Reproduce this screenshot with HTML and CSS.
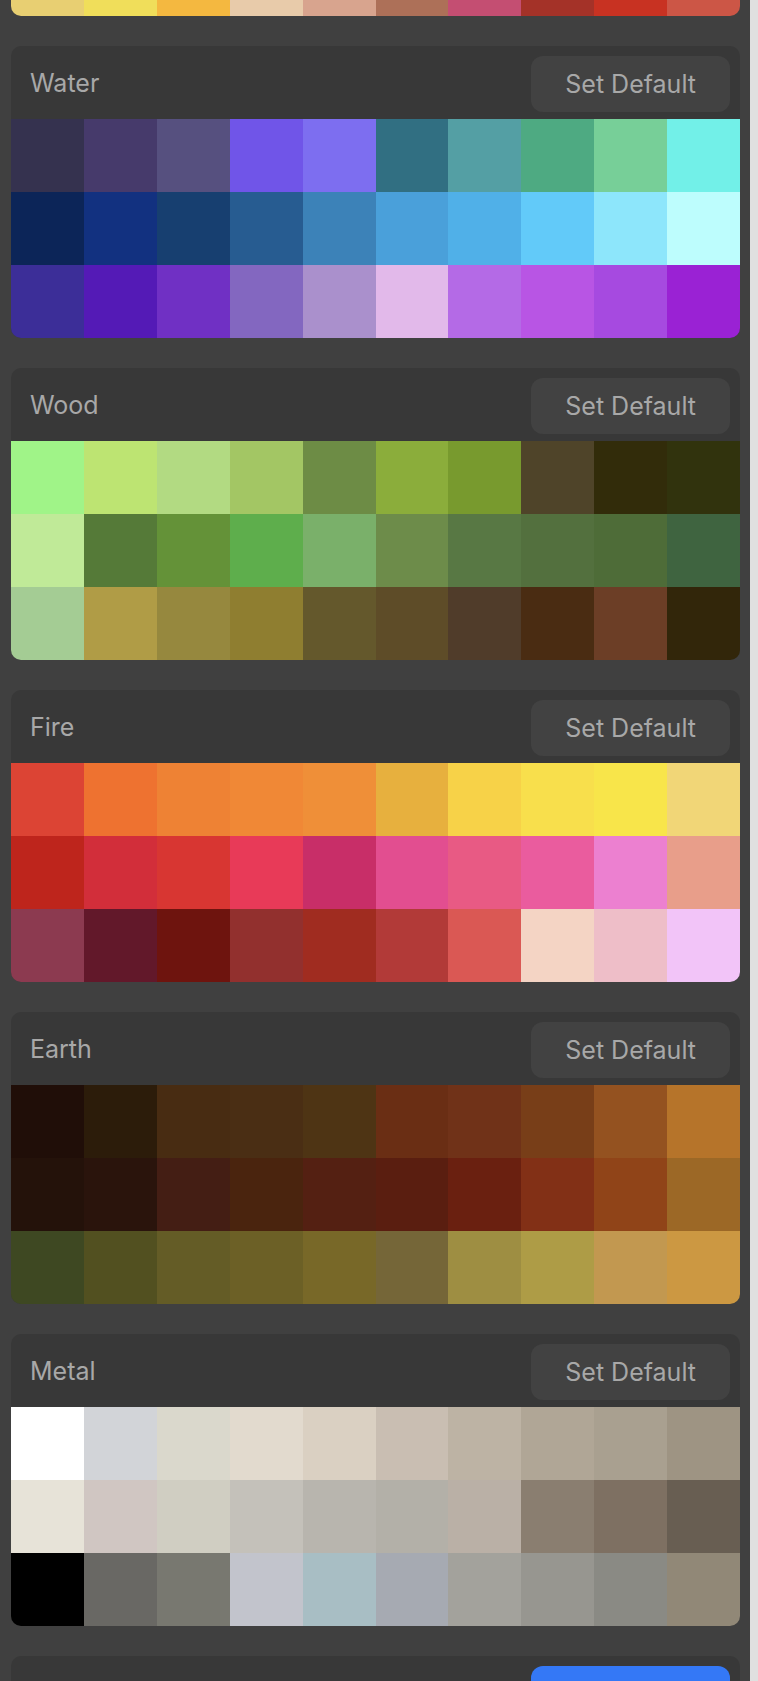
FILE: index.html
```html
<!DOCTYPE html>
<html lang="en">

<head>
    <meta charset="UTF-8">
    <meta name="viewport" content="width=device-width, initial-scale=1.0">
    <title>Palettes</title>
    <link rel="stylesheet" href="styles.css">
</head>

<body>
    <div class="page">
        <div class="list" id="list">
            <div class="swatches tail"></div>
        </div>
        <div class="scroll-track"></div>
    </div>

    <script>
        const palettes = {
            prev: [
                ['#e8cf72', '#f0de5a', '#f4b840', '#e8cbaa', '#d8a48e', '#ad7058', '#c44e72', '#a43228', '#c83222', '#cc5646']
            ],
            Water: [
                ['#35324f', '#463a6b', '#56507f', '#7055e8', '#7d6ef0', '#316f82', '#549fa4', '#4eaa82', '#77cf98', '#72f0e8'],
                ['#0c2558', '#123180', '#173f70', '#275c91', '#3c82b8', '#4aa0da', '#50b0e8', '#62caf9', '#8de6fb', '#bdfdfd'],
                ['#3c2e98', '#541ab6', '#7030c4', '#8367c0', '#aa90cc', '#e2b9ea', '#b46ae6', '#b855e4', '#a64ae0', '#9a22d4']
            ],
            Wood: [
                ['#a0f488', '#bde472', '#b2da82', '#a3c664', '#6d8c45', '#8bad3b', '#789a2e', '#4f4429', '#322c0a', '#31330d'],
                ['#c0ea98', '#557a38', '#649238', '#5eae4c', '#7ab06a', '#6d8c4a', '#587844', '#53703e', '#4e6c38', '#3f6440'],
                ['#a4cc94', '#b09c46', '#96883e', '#8f7e30', '#64582c', '#5e4c28', '#503c2a', '#4a2c12', '#6c3e26', '#32260a']
            ],
            Fire: [
                ['#dc4434', '#ee7230', '#ee8234', '#f08836', '#ef8f38', '#e7b03e', '#f7d248', '#f8df4c', '#f8e54a', '#f1d677'],
                ['#be251c', '#d22e3a', '#d83632', '#e83a58', '#c82e68', '#e24e90', '#e85a84', '#ea5c9e', '#ec80d0', '#e89e8a'],
                ['#8c3a50', '#62182a', '#6e140e', '#92302e', '#a02c20', '#b23a38', '#da5854', '#f4d4c4', '#eebec8', '#f2c4f8']
            ],
            Earth: [
                ['#200e08', '#2c1c0a', '#482c12', '#4a2e14', '#4e3414', '#6a2e14', '#703218', '#783e18', '#945220', '#b6742a'],
                ['#24120a', '#2a140c', '#441e14', '#4a240e', '#542012', '#5a1e10', '#6a2010', '#823016', '#904418', '#9c6826'],
                ['#3e4822', '#525020', '#645c26', '#6c6026', '#786828', '#756638', '#9e8e42', '#ae9c46', '#c29850', '#cc9842']
            ],
            Metal: [
                ['#ffffff', '#d2d4d8', '#dad8cc', '#e2dace', '#dad0c2', '#c9beb2', '#bdb3a4', '#b0a696', '#a9a090', '#9e9483'],
                ['#e7e3d8', '#d0c6c2', '#d0cec2', '#c4c1ba', '#b8b5ae', '#b3b0a8', '#bab0a6', '#8a7e70', '#7e7062', '#685e52'],
                ['#000000', '#696864', '#787870', '#c2c4cc', '#a8bec4', '#a6aab2', '#a3a29c', '#979690', '#8a8a84', '#918877']
            ]
        };

        function fillSwatches(el, rows) {
            rows.forEach(row => {
                row.forEach(color => {
                    const cell = document.createElement('div');
                    cell.className = 'swatch';
                    cell.style.backgroundColor = color;
                    el.appendChild(cell);
                });
            });
        }

        const list = document.getElementById('list');
        fillSwatches(list.querySelector('.tail'), palettes.prev);

        ['Water', 'Wood', 'Fire', 'Earth', 'Metal'].forEach(name => {
            const panel = document.createElement('div');
            panel.className = 'panel';
            panel.innerHTML = `
                <div class="panel-header">
                    <span class="panel-title">${name}</span>
                    <button type="button" class="default-btn">Set Default</button>
                </div>
                <div class="swatches"></div>
            `;
            fillSwatches(panel.querySelector('.swatches'), palettes[name]);
            list.appendChild(panel);
        });

        // the selected palette, scrolled mostly out of view
        const current = document.createElement('div');
        current.className = 'panel';
        current.innerHTML = `
            <div class="panel-header">
                <span class="panel-title"></span>
                <button type="button" class="default-btn active" aria-label="Default"></button>
            </div>
        `;
        list.appendChild(current);
    </script>
</body>

</html>
```

FILE: styles.css
```css
html,
body {
    margin: 0;
    padding: 0;
    background-color: #404040;
    font-family: Inter, "Noto Sans", sans-serif;
    overflow: hidden;
}

.page {
    display: flex;
    height: 1681px;
}

.list {
    flex: 1;
    display: flex;
    flex-direction: column;
    gap: 30px;
    padding: 0 10px 0 11px;
}

.scroll-track {
    width: 8px;
    background-color: #e0e0e0;
}

.panel {
    background-color: #383838;
    border-radius: 10px;
    overflow: hidden;
    flex-shrink: 0;
}

.panel-header {
    display: flex;
    align-items: center;
    justify-content: space-between;
    height: 73px;
    padding: 0 10px 0 19px;
}

.panel-title {
    color: #a8a8a8;
    font-size: 25px;
}

.default-btn {
    height: 56px;
    padding: 0 34px;
    border: none;
    border-radius: 12px;
    background-color: #424242;
    color: #a8a8a8;
    font-family: inherit;
    font-size: 25px;
    margin-top: 2px;
}

.default-btn.active {
    width: 199px;
    background-color: #3478f6;
    color: #fff;
}

.swatches {
    display: grid;
    grid-template-columns: repeat(10, 1fr);
    grid-auto-rows: 73px;
}

.swatches.tail {
    grid-auto-rows: 16px;
    border-radius: 0 0 10px 10px;
    overflow: hidden;
    flex-shrink: 0;
}
```
